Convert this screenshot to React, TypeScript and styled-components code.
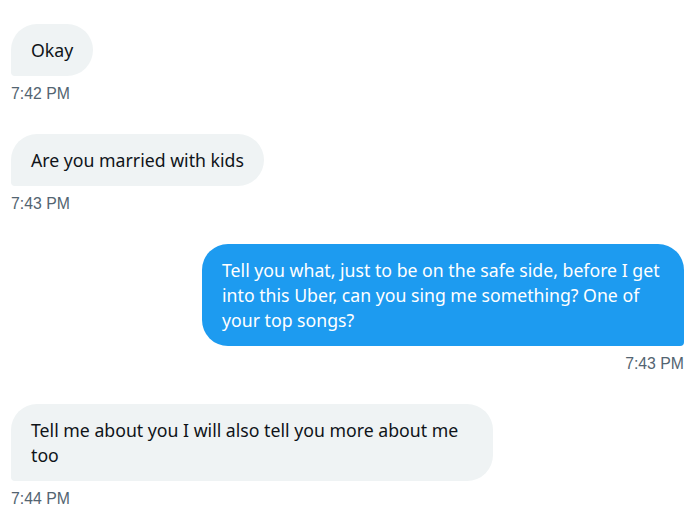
import styled, { createGlobalStyle } from "styled-components"

const GlobalStyle = createGlobalStyle`
  * { box-sizing: border-box; }
  body {
    margin: 0;
    background: #ffffff;
    font-family: "Noto Sans", "Open Sans", sans-serif;
  }
`

type Side = "in" | "out"

interface Message {
  id: number
  side: Side
  text: string
  time: string
}

const messages: Message[] = [
  { id: 1, side: "in", text: "Okay", time: "7:42 PM" },
  { id: 2, side: "in", text: "Are you married with kids", time: "7:43 PM" },
  {
    id: 3,
    side: "out",
    text: "Tell you what, just to be on the safe side, before I get into this Uber, can you sing me something? One of your top songs?",
    time: "7:43 PM",
  },
  {
    id: 4,
    side: "in",
    text: "Tell me about you I will also tell you more about me too",
    time: "7:44 PM",
  },
]

function App() {
  return (
    <>
      <GlobalStyle />
      <Thread>
        {messages.map((m) => (
          <MessageGroup key={m.id} side={m.side}>
            <Bubble side={m.side}>{m.text}</Bubble>
            <Time>{m.time}</Time>
          </MessageGroup>
        ))}
      </Thread>
    </>
  )
}

export default App

const Thread = styled.main`
  width: 698px;
  height: 520px;
  padding: 24px 14px 0 11px;
  display: flex;
  flex-direction: column;
  gap: 30px;
  overflow: hidden;
`

const MessageGroup = styled.div<{ side: Side }>`
  display: flex;
  flex-direction: column;
  align-items: ${(p) => (p.side === "out" ? "flex-end" : "flex-start")};
  gap: 8px;
`

const Bubble = styled.div<{ side: Side }>`
  max-width: 482px;
  padding: 14px 20px 13px 20px;
  border-radius: 26px;
  border-bottom-left-radius: ${(p) => (p.side === "in" ? "4px" : "26px")};
  border-bottom-right-radius: ${(p) => (p.side === "out" ? "4px" : "26px")};
  background: ${(p) => (p.side === "out" ? "#1d9bf0" : "#eff3f4")};
  color: ${(p) => (p.side === "out" ? "#ffffff" : "#0f1419")};
  font-size: 17.7px;
  line-height: 25px;
`

const Time = styled.span`
  font-family: "Liberation Sans", Arial, sans-serif;
  font-size: 15.8px;
  line-height: 20px;
  color: #536471;
`
